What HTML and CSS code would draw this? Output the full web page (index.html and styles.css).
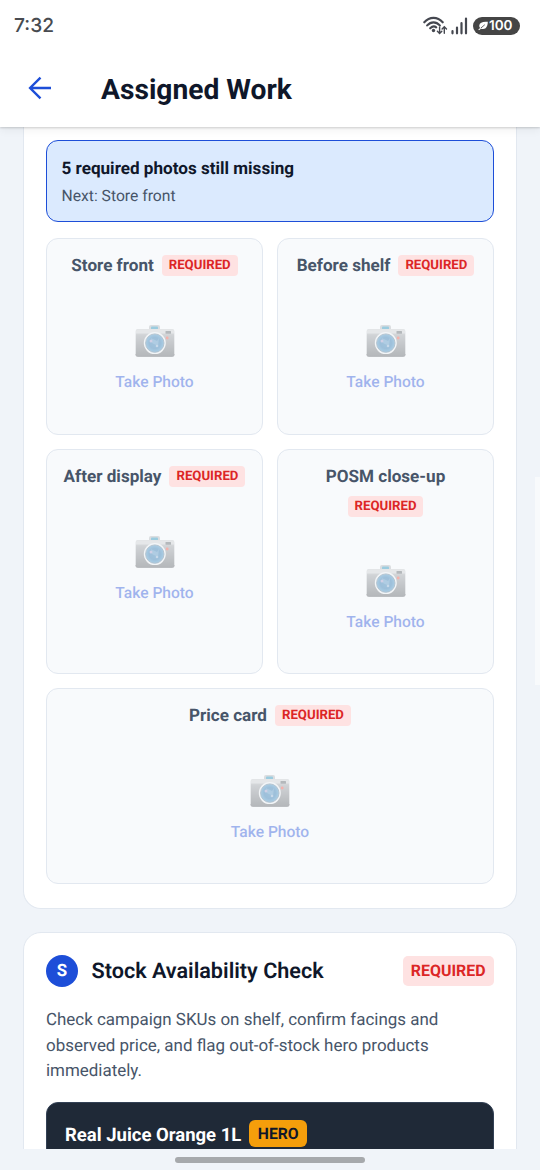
FILE: index.html
```html
<!DOCTYPE html>
<html lang="en">
<head>
<meta charset="utf-8">
<title>Assigned Work</title>
<link rel="stylesheet" href="styles.css">
</head>
<body>
<svg class="defs" width="0" height="0" aria-hidden="true">
  <defs>
    <linearGradient id="body" x1="0" y1="0" x2="0" y2="1"><stop offset="0" stop-color="#c4c6c9"/><stop offset="0.25" stop-color="#93979c"/><stop offset="1" stop-color="#505459"/></linearGradient>
    <radialGradient id="lens"><stop offset="0" stop-color="#2373ae"/><stop offset="0.6" stop-color="#1769a8"/><stop offset="1" stop-color="#3a8fc4"/></radialGradient>
    <symbol id="camera" viewBox="0 0 40 34">
      <path d="M14 6V3Q14 1 16 1H23Q25 1 25 3V6Z" fill="#b0b4b8"/>
      <rect x="16" y="2.6" width="7" height="3" rx="0.8" fill="#1288b4"/>
      <rect x="0.7" y="5" width="38.6" height="27.6" rx="2" fill="url(#body)"/>
      <path d="M1 7Q1 5.4 2.8 5.4H37.2Q39 5.4 39 7V9.5H1Z" fill="#c9ccce"/>
      <rect x="30.5" y="7" width="5.5" height="2.8" rx="0.5" fill="#50565c"/>
      <circle cx="32.2" cy="14" r="1.4" fill="#f04535"/>
      <path d="M1 30V31Q1 32.5 2.5 32.5H37.5Q39 32.5 39 31V30" fill="none" stroke="#505459" stroke-width="0.8"/>
      <circle cx="19.8" cy="19.1" r="11" fill="#ebeff2"/>
      <circle cx="19.8" cy="19.1" r="9.2" fill="url(#lens)" stroke="#456a88" stroke-width="0.9"/>
      <path d="M16 14L22 17L24 14L23 22L17 19Z" fill="#7bb0d8" opacity="0.4"/>
      <circle cx="16" cy="17" r="1.5" fill="#9594c6"/><circle cx="22" cy="22" r="1.3" fill="#83a8cd"/>
    </symbol>
  </defs>
</svg>
<div class="phone">
  <div class="status">
    <span class="time">7:32</span>
    <div class="indicators">
      <svg class="wifi" width="26" height="20" viewBox="0 0 26 20" fill="none" stroke="#454850" stroke-width="2.1" stroke-linecap="round">
        <path d="M1.3 6.3C6.5.4 14.5.4 19.7 6.3M4.2 9.4C8 5.3 13 5.3 16.8 9.4M7.2 12.3Q10.5 9 13.2 11.4"/>
        <circle cx="10.5" cy="14.5" r="1.7" fill="#454850" stroke="none"/>
        <path d="M16.6 11V17.2M14.4 15.2L16.6 17.5L18.8 15.2M21.3 17.2V11M19.1 13L21.3 10.7L23.5 13" stroke-width="1.4"/>
      </svg>
      <svg class="signal" width="17" height="18" viewBox="0 0 17 18" stroke="#454850" stroke-width="2.2" stroke-linecap="round"><path d="M1.5 14.2V16.3M6 10.5V16.3M10.5 6.2V16.3M15 1.5V16.3"/></svg>
      <div class="battery">
        <svg width="10" height="10" viewBox="0 0 10 10"><path d="M9.8.8C5 .3 1.6 1.5 1.3 4.2C1.1 5.5 1.7 6.5 2.2 6.9L.3 8.5L1 9.2L3 7.7C7.8 9.3 9.8 5.5 9.8.8Z" fill="#fff"/><path d="M2.8 7.1L6.8 3.7" stroke="#454545" stroke-width=".8"/></svg>
        <span>100</span>
      </div>
    </div>
  </div>
  <header class="appbar">
    <svg class="back" width="24" height="24" viewBox="0 0 24 24" fill="none" stroke="#1d4ed8" stroke-width="2.4"><path d="M23 12H2.2M12.5 1.6L2.1 12L12.5 22.4"/></svg>
    <h1>Assigned Work</h1>
  </header>
  <main class="content">
    <section class="card photos">
      <div class="notice"><strong>5 required photos still missing</strong><span>Next: Store front</span></div>
      <div class="grid">
        <div class="tile"><div class="label"><b>Store front</b><i class="tag">REQUIRED</i></div><div class="shoot"><svg width="40" height="34"><use href="#camera"/></svg><span>Take Photo</span></div></div>
        <div class="tile"><div class="label"><b>Before shelf</b><i class="tag">REQUIRED</i></div><div class="shoot"><svg width="40" height="34"><use href="#camera"/></svg><span>Take Photo</span></div></div>
        <div class="tile"><div class="label"><b>After display</b><i class="tag">REQUIRED</i></div><div class="shoot"><svg width="40" height="34"><use href="#camera"/></svg><span>Take Photo</span></div></div>
        <div class="tile"><div class="label"><b>POSM close-up</b><i class="tag">REQUIRED</i></div><div class="shoot"><svg width="40" height="34"><use href="#camera"/></svg><span>Take Photo</span></div></div>
        <div class="tile wide"><div class="label"><b>Price card</b><i class="tag">REQUIRED</i></div><div class="shoot"><svg width="40" height="34"><use href="#camera"/></svg><span>Take Photo</span></div></div>
      </div>
    </section>
    <section class="card stock">
      <div class="heading"><span class="step">S</span><h2>Stock Availability Check</h2><i class="tag large">REQUIRED</i></div>
      <p>Check campaign SKUs on shelf, confirm facings and observed price, and flag out-of-stock hero products immediately.</p>
      <div class="product"><b>Real Juice Orange 1L</b><span class="hero">HERO</span></div>
    </section>
    <div class="scrollbar"></div>
  </main>
  <div class="navbar"><div class="handle"></div></div>
</div>
</body>
</html>
```
FILE: styles.css
```css
* { box-sizing: border-box; }
body { margin: 0; font-family: Roboto, sans-serif; color: #0f172a; text-rendering: geometricPrecision; }
h1, h2, p { margin: 0; }
i { font-style: normal; }
svg { display: block; flex: none; }
.defs { position: absolute; }
.phone { width: 540px; height: 1170px; display: flex; flex-direction: column; background: #f0f4f9; overflow: hidden; }

.status { height: 50px; flex: none; background: #fff; display: flex; align-items: center; justify-content: space-between; padding: 0 20px 0 14px; position: relative; z-index: 2; }
.time { font: 500 19.2px/24px Inter, sans-serif; color: #484b50; }
.indicators { display: flex; align-items: center; padding-top: 1px; }
.wifi { margin-right: 2px; }
.signal { margin-right: 5px; }
.battery { width: 47px; height: 18px; border-radius: 9px; background: #454545; color: #fff; display: flex; align-items: center; padding-left: 5px; gap: 1px; }
.battery span { font: 600 13.5px/18px Inter, sans-serif; }

.appbar { height: 77px; flex: none; background: #fff; display: flex; align-items: center; padding: 0 27px 0 28px; gap: 49px; box-shadow: 0 1px 2px rgba(0, 0, 0, 0.16), 0 3px 9px rgba(0, 0, 0, 0.06); position: relative; z-index: 1; }
.back { margin-bottom: 1px; }
.appbar h1 { font-size: 28.2px; line-height: 36px; font-weight: 700; padding-top: 2px; }

.content { flex: 1; min-height: 0; overflow: hidden; position: relative; padding: 0 23px; display: flex; flex-direction: column; gap: 23px; }
.card { background: #fff; border: 1.5px solid #e2e8f0; padding: 22px; flex: none; }
.photos { border-top: 0; border-radius: 0 0 18px 18px; height: 782px; padding-top: 13px; }
.notice { height: 82px; border: 1.5px solid #1d4ed8; border-radius: 12px; background: #dbeafe; padding: 16px 14.5px; display: flex; flex-direction: column; gap: 4px; }
.notice strong { font-size: 17.1px; line-height: 24px; }
.notice span { font-size: 15.7px; line-height: 21px; color: #475569; }

.grid { display: grid; grid-template-columns: 1fr 1fr; grid-template-rows: 197px 225px 196px; gap: 14px; margin-top: 16px; }
.tile { border: 1.5px solid #e2e8f0; border-radius: 12px; background: #f8fafc; padding: 15px 10px 0; text-align: center; }
.wide { grid-column: 1 / 3; }
.label { display: flex; flex-wrap: wrap; align-items: center; justify-content: center; gap: 7px 8px; }
.label b { font-size: 17.1px; line-height: 23px; padding-top: 1px; color: #475569; }
.tag { background: #fee2e2; color: #dc2626; font-weight: 700; font-size: 13.2px; line-height: 21px; padding: 0 7px; border-radius: 4px; }
.label .tag { margin-bottom: 1px; }
.shoot { display: flex; flex-direction: column; align-items: center; gap: 13px; padding-top: 45.5px; opacity: 0.4; }
.shoot span { font-size: 15.6px; line-height: 22px; font-weight: 500; color: #1d4ed8; }

.stock { border-radius: 18px; }
.heading { display: flex; align-items: center; height: 32px; }
.step { width: 32px; height: 32px; border-radius: 50%; background: #1d4ed8; color: #fff; font-size: 16.9px; font-weight: 700; line-height: 32px; text-align: center; }
.heading h2 { font-size: 21.6px; line-height: 28px; font-weight: 600; margin-left: 13.5px; padding-top: 2px; flex: 1; }
.large { font-size: 15.9px; line-height: 30px; padding: 0 8.5px 0 8px; border-radius: 5px; }
.stock p { margin-top: 21px; font-size: 16.95px; line-height: 25.5px; color: #475569; }
.product { height: 90px; margin-top: 17px; border: 1.5px solid #334155; border-radius: 12px; background: #1f2937; color: #fff; display: flex; align-items: flex-start; gap: 8px; padding: 17px 18px; }
.product b { font-size: 18.5px; line-height: 30px; }
.hero { background: #f59e0b; color: #0f172a; font-size: 15.7px; font-weight: 700; line-height: 27px; border-radius: 6px; padding: 0 8.5px; }
.scrollbar { position: absolute; right: 0; top: 350px; width: 5px; height: 208px; background: #f8fafc; }
.navbar { height: 21px; flex: none; display: flex; justify-content: center; padding-top: 8px; }
.handle { width: 190px; height: 5.5px; border-radius: 3px; background: #a6a9ac; }
```
